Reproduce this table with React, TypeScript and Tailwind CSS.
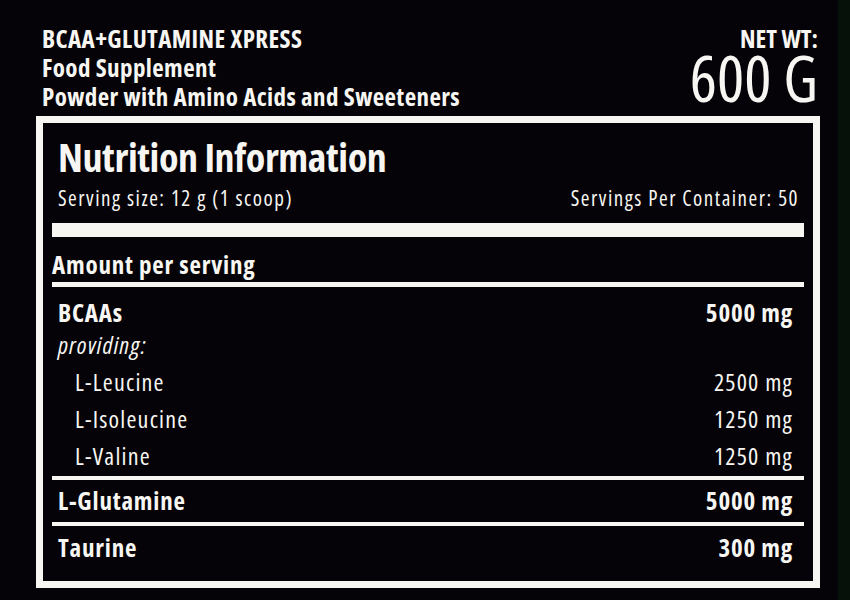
import React from 'react'

type Row = {
    name: string;
    amount: string;
};

const bcaaRows: Row[] = [
    { name: "L-Leucine", amount: "2500 mg" },
    { name: "L-Isoleucine", amount: "1250 mg" },
    { name: "L-Valine", amount: "1250 mg" },
];

const App = () => {
    return (
        <div className="w-[850px] h-[600px] bg-[#050308] text-[#f7f6f2] flex overflow-hidden font-['Open_Sans',sans-serif] font-stretch-condensed">
            <div className='w-[838px] flex flex-col'>
                {/* HEADER */}
                <div className='flex justify-between pt-[24px] pl-[42px] pr-[20px]'>
                    <div className='text-[25px] leading-[29px] font-bold tracking-[0.4px]'>
                        <p>BCAA+GLUTAMINE XPRESS</p>
                        <p>Food Supplement</p>
                        <p>Powder with Amino Acids and Sweeteners</p>
                    </div>
                    <div className='flex flex-col items-end'>
                        <p className='text-[25px] leading-[29px] font-bold'>NET WT:</p>
                        <p className='text-[64px] leading-[48px] mt-[1px]'>600 G</p>
                    </div>
                </div>

                {/* NUTRITION BOX */}
                <div className='ml-[36px] mt-[5px] w-[784px] h-[472px] border-[7px] border-[#f7f6f2] px-[9px]'>
                    <div className='px-[6px] pt-[14px]'>
                        <h1 className='text-[40px] leading-[40px] font-bold tracking-[-0.4px]'>Nutrition Information</h1>
                        <div className='flex justify-between mt-[9px] text-[21px] leading-[24px] tracking-[1.5px]'>
                            <span>Serving size: 12 g (1 scoop)</span>
                            <span className='-mr-[1px]'>Servings Per Container: 50</span>
                        </div>
                    </div>
                    <div className='h-[14px] bg-[#f7f6f2] mt-[13px]' />
                    <p className='pt-[13px] pb-[4px] text-[25px] leading-[28px] font-bold tracking-[0.8px]'>Amount per serving</p>
                    <div className='h-[5px] bg-[#f7f6f2]' />

                    {/* BCAAs */}
                    <div className='pt-[10px] pl-[6px] pr-[11px] text-[24px] tracking-[1.2px]'>
                        <div className='flex justify-between leading-[30px] text-[25px] font-bold tracking-[0.8px]'>
                            <span>BCAAs</span>
                            <span>5000 mg</span>
                        </div>
                        <p className='leading-[36px] italic'>providing:</p>
                        {bcaaRows.map((r) => (
                            <div key={r.name} className='flex justify-between leading-[37px] pl-[17px]'>
                                <span>{r.name}</span>
                                <span>{r.amount}</span>
                            </div>
                        ))}
                    </div>
                    <div className='h-[4px] bg-[#f7f6f2] mt-[2px]' />
                    <div className='h-[42px] flex items-center justify-between pl-[6px] pr-[11px] text-[25px] font-bold tracking-[0.8px]'>
                        <span>L-Glutamine</span>
                        <span>5000 mg</span>
                    </div>
                    <div className='h-[4px] bg-[#f7f6f2]' />
                    <div className='h-[44px] flex items-center justify-between pl-[6px] pr-[11px] text-[25px] font-bold tracking-[0.8px]'>
                        <span>Taurine</span>
                        <span>300 mg</span>
                    </div>
                </div>
            </div>
            {/* right edge strip */}
            <div className='flex-1 bg-[#06110a]' />
        </div>
    )
}

export default App
